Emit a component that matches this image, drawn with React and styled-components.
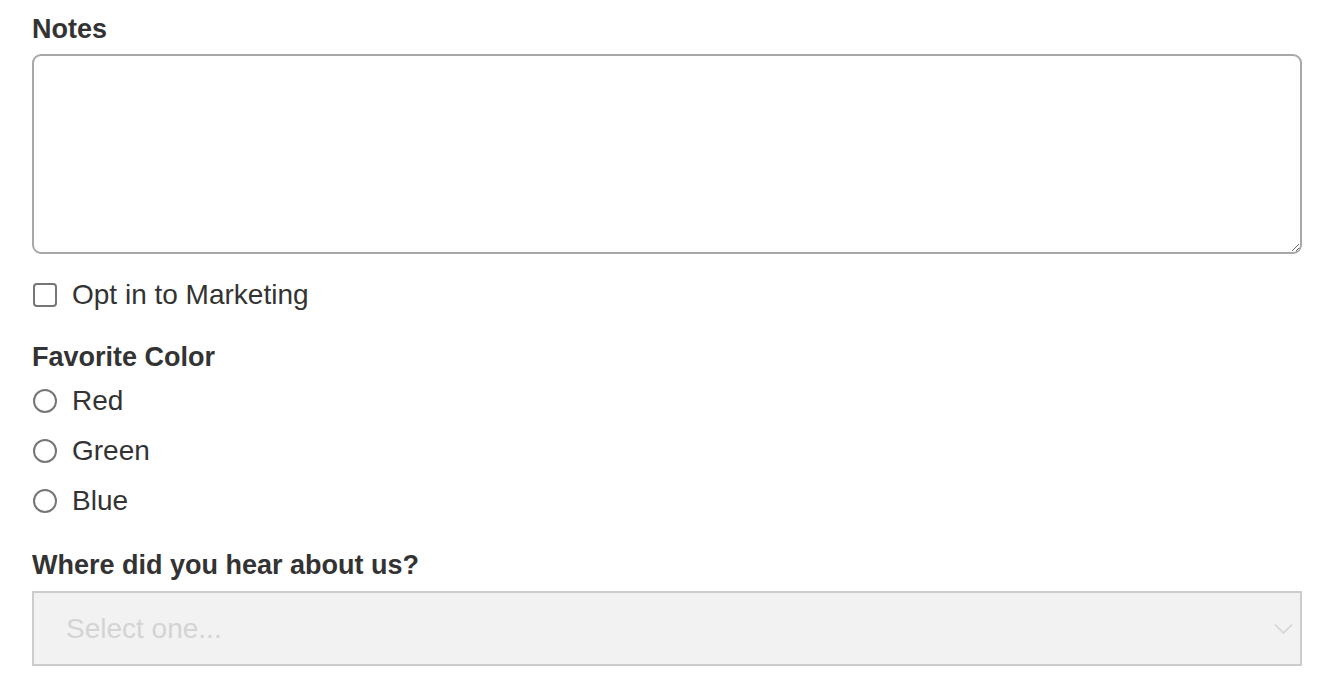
import React from "react";
import styled, { createGlobalStyle } from "styled-components";

const GlobalStyle = createGlobalStyle`
  body {
    margin: 0;
    background: #fff;
    font-family: "Liberation Sans", Arial, sans-serif;
    color: #333;
  }
`;

const Form = styled.form`
  display: flex;
  flex-direction: column;
  padding: 13px 40px 0 32px;
`;

const Label = styled.label`
  display: block;
  font-size: 27px;
  font-weight: bold;
  line-height: 32px;
  margin-top: ${(p) => p.$top || 0}px;
  margin-bottom: ${(p) => p.$gap || 0}px;
`;

const TextArea = styled.textarea`
  display: block;
  box-sizing: border-box;
  width: 100%;
  height: 200px;
  border: 2px solid #a8a8a8;
  border-radius: 9px;
  font: inherit;
  font-size: 24px;
  resize: vertical;
  outline: none;
`;

const Option = styled.label`
  display: flex;
  align-items: center;
  gap: 15px;
  height: 50px;
  font-size: 28px;
  color: #333;
`;

const Box = styled.span`
  box-sizing: border-box;
  width: 24px;
  height: 24px;
  margin-left: 1px;
  border: 2px solid #767676;
  border-radius: ${(p) => (p.$round ? "50%" : "4px")};
  background: #fff;
`;

const CheckRow = styled(Option)`
  margin-top: 16px;
`;

const RadioGroup = styled.div`
  display: flex;
  flex-direction: column;
`;

const SelectWrap = styled.div`
  position: relative;
  box-sizing: border-box;
  height: 75px;
  border: 2px solid #cccccc;
  background: #f2f2f2;
  display: flex;
  align-items: center;
  padding: 0 32px;
  font-size: 28px;
  color: #d4d4d4;
`;

const Chevron = styled.svg`
  position: absolute;
  right: 7px;
  top: 50%;
  transform: translateY(-50%);
`;

export default function App() {
  return (
    <>
      <GlobalStyle />
      <Form>
        <Label $gap={9}>Notes</Label>
        <TextArea />
        <CheckRow>
          <Box />
          <span>Opt in to Marketing</span>
        </CheckRow>
        <Label $top={21} $gap={3}>Favorite Color</Label>
        <RadioGroup>
          {["Red", "Green", "Blue"].map((c) => (
            <Option key={c}>
              <Box $round />
              <span>{c}</span>
            </Option>
          ))}
        </RadioGroup>
        <Label $top={23} $gap={10}>Where did you hear about us?</Label>
        <SelectWrap>
          Select one...
          <Chevron width="19" height="12" viewBox="0 0 19 12">
            <path d="M1 1.5 L9.5 10 L18 1.5" fill="none" stroke="#d2d2d2" strokeWidth="1.5" />
          </Chevron>
        </SelectWrap>
      </Form>
    </>
  );
}
